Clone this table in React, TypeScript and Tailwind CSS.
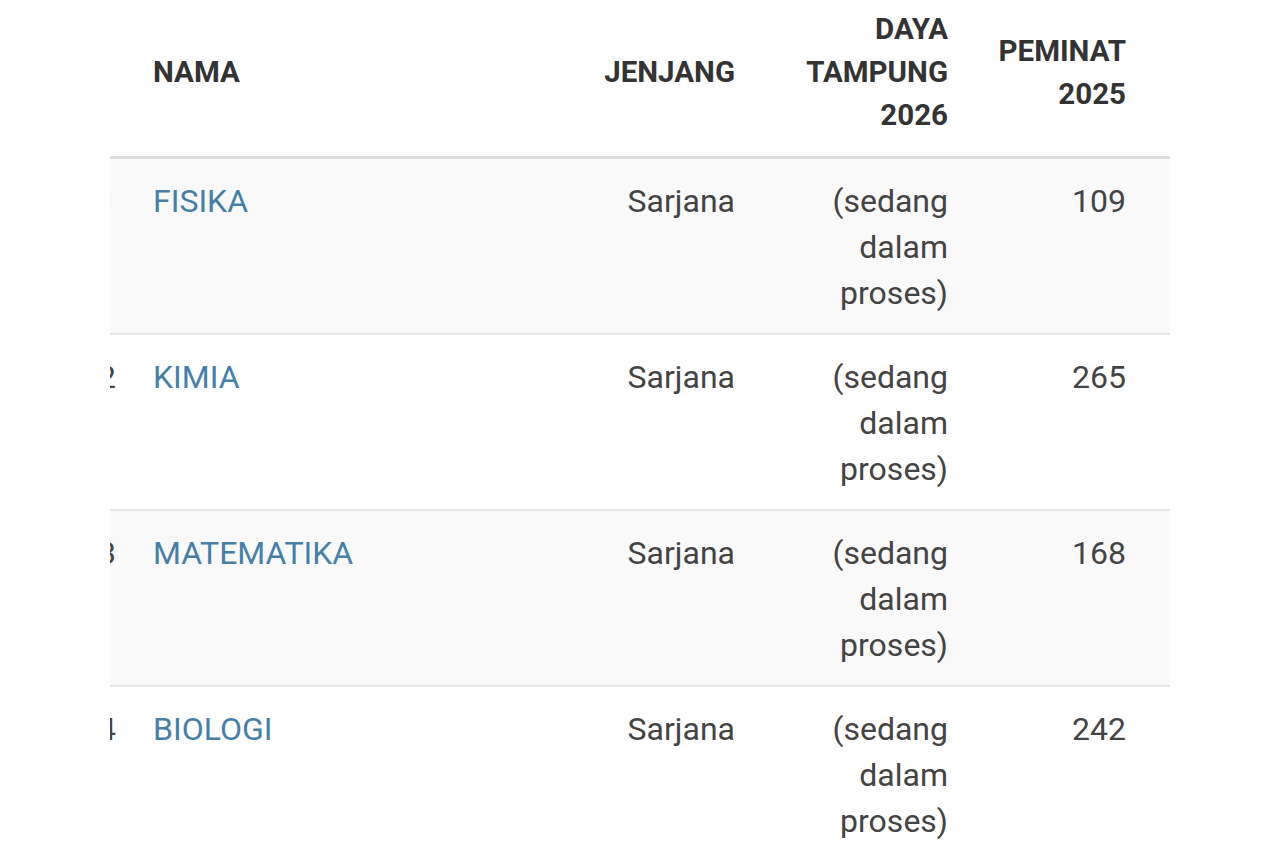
const rows = [
  { no: 1, nama: 'FISIKA', peminat: 109 },
  { no: 2, nama: 'KIMIA', peminat: 265 },
  { no: 3, nama: 'MATEMATIKA', peminat: 168 },
  { no: 4, nama: 'BIOLOGI', peminat: 242 },
]

export default function App() {
  return (
    <div className="w-[1280px] h-[853px] overflow-hidden bg-white font-['Roboto',sans-serif]">
      {/* table is scrolled sideways, so the No column is mostly cut off */}
      <div className="ml-[110px] w-[1060px] overflow-hidden">
        <table className="-ml-[17px] w-[1077px] table-fixed border-collapse">
          <colgroup>
            <col className="w-[47px]" />
            <col className="w-[435px]" />
            <col className="w-[175px]" />
            <col className="w-[213px]" />
            <col className="w-[207px]" />
          </colgroup>
          <thead>
            <tr className="border-b-[3px] border-[#dddddd] text-[29.5px] leading-[43px] font-bold text-[#333333]">
              <th className="pt-[8px] pb-[19px]" />
              <th className="pt-[8px] pb-[19px] pl-[13px] text-left align-middle">NAMA</th>
              <th className="pt-[8px] pb-[19px] pr-[15px] text-right align-middle">JENJANG</th>
              <th className="pt-[8px] pb-[19px] pr-[15px] text-right align-middle whitespace-nowrap">
                DAYA
                <br />
                TAMPUNG
                <br />
                2026
              </th>
              <th className="pt-[8px] pb-[19px] pr-[44px] text-right align-middle whitespace-nowrap">
                PEMINAT
                <br />
                2025
              </th>
            </tr>
          </thead>
          <tbody className="text-[32px] leading-[46px] text-[#444444]">
            {rows.map((r) => (
              <tr
                key={r.no}
                className={`border-b-2 border-[#e6e6e6] ${r.no % 2 === 1 ? 'bg-[#f9f9f9]' : 'bg-white'}`}
              >
                <td className="pt-[19px] pb-[17px] pr-[24px] text-right align-top">{r.no}</td>
                <td className="pt-[19px] pb-[17px] pl-[13px] align-top text-[#487fa9]">{r.nama}</td>
                <td className="pt-[19px] pb-[17px] pr-[15px] text-right align-top">Sarjana</td>
                <td className="pt-[19px] pb-[17px] pr-[15px] text-right align-top whitespace-nowrap">
                  (sedang
                  <br />
                  dalam
                  <br />
                  proses)
                </td>
                <td className="pt-[19px] pb-[17px] pr-[44px] text-right align-top">{r.peminat}</td>
              </tr>
            ))}
          </tbody>
        </table>
      </div>
    </div>
  )
}
